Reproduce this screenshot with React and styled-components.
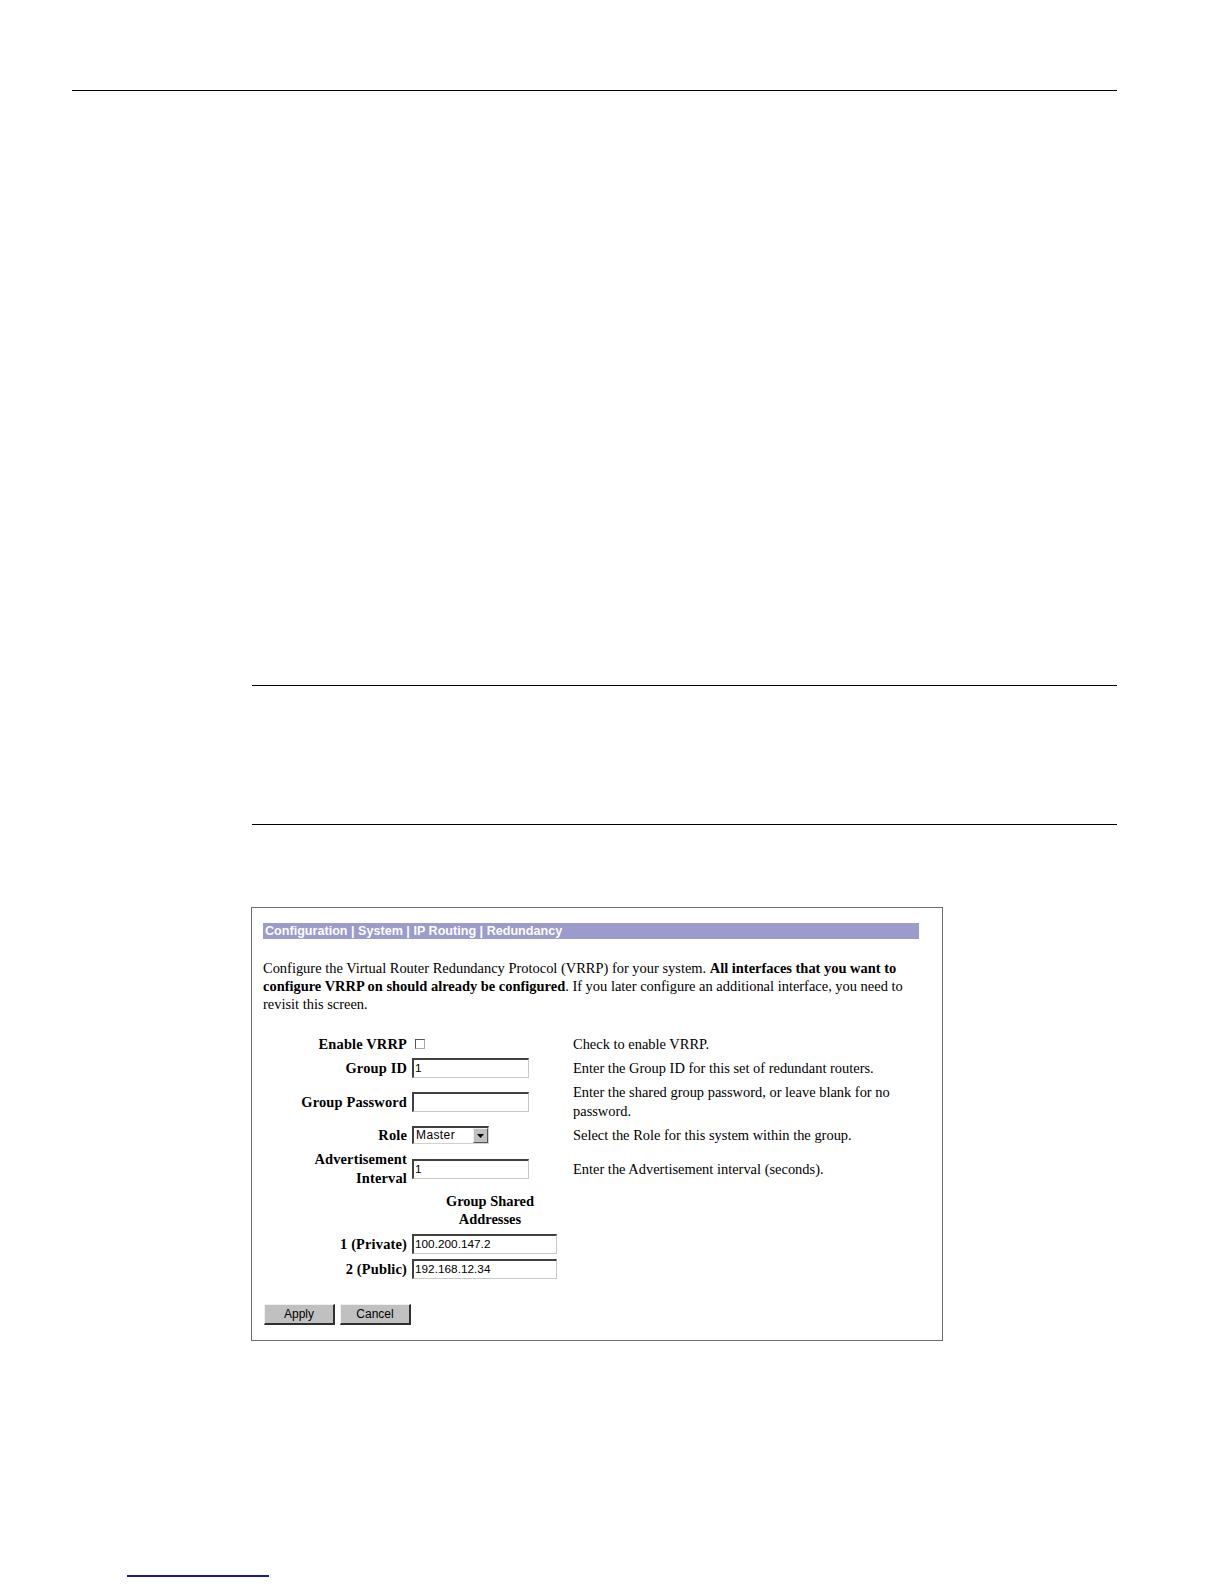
import React from "react";
import styled, { createGlobalStyle } from "styled-components";

const GlobalStyle = createGlobalStyle`
  html, body { margin: 0; padding: 0; background: #ffffff; }
  body { font-family: "Liberation Serif", "Times New Roman", serif; color: #000; }
`;

const Page = styled.div`
  display: flex;
  flex-direction: column;
  align-items: flex-start;
`;

const Rule = styled.div`
  height: 1px;
  background: #000;
  margin-top: ${(p) => p.$top}px;
  margin-left: ${(p) => p.$left}px;
  width: ${(p) => p.$width}px;
`;

const FooterRule = styled.div`
  height: 2px;
  background: #1c1c8a;
  margin-top: 234px;
  margin-left: 127px;
  width: 142px;
`;

const Panel = styled.div`
  margin-top: 82px;
  margin-left: 251px;
  width: 692px;
  box-sizing: border-box;
  border: 1px solid #6e6e6e;
  padding: 15px 23px 15px 11px;
`;

const TitleBar = styled.div`
  height: 16px;
  background: #9b9bcc;
  color: #ffffff;
  font-family: "Liberation Sans", Arial, sans-serif;
  font-weight: bold;
  font-size: 12.6px;
  line-height: 16px;
  padding-left: 2px;
  white-space: nowrap;
`;

const Intro = styled.p`
  margin: 20px 0 0 0;
  font-size: 14.45px;
  line-height: 18.2px;
`;

const Form = styled.div`
  display: grid;
  grid-template-columns: 144px 156px 346px;
  column-gap: 5px;
  row-gap: 5.3px;
  align-items: center;
  margin-top: 21px;
  font-size: 14.45px;
  line-height: 18.2px;
`;

const Label = styled.div`
  text-align: right;
  font-weight: bold;
  letter-spacing: 0.15px;
`;

const Control = styled.div`
  display: flex;
  align-items: center;
  min-height: ${(p) => (p.$tall ? "20px" : "0")};
  justify-content: ${(p) => (p.$center ? "center" : "flex-start")};
  font-weight: ${(p) => (p.$center ? "bold" : "normal")};
  text-align: center;
`;

const Help = styled.div``;

const Box = styled.div`
  width: 10px;
  height: 10px;
  margin-left: 3px;
  box-sizing: border-box;
  border: 1px solid #555;
  border-right-color: #aaa;
  border-bottom-color: #aaa;
  background: #fff;
`;

const TextInput = styled.div`
  width: ${(p) => p.$w}px;
  height: 20px;
  box-sizing: border-box;
  border-top: 2px solid #404040;
  border-left: 2px solid #404040;
  border-right: 1px solid #c8c8c8;
  border-bottom: 1px solid #c8c8c8;
  background: #fff;
  font-family: "Liberation Sans", Arial, sans-serif;
  font-size: 11.8px;
  line-height: 17px;
  padding-left: 1px;
  text-align: left;
  white-space: nowrap;
  overflow: hidden;
`;

const Select = styled.div`
  width: 77px;
  height: 18px;
  box-sizing: border-box;
  border-top: 2px solid #404040;
  border-left: 2px solid #404040;
  border-right: 1px solid #d0d0d0;
  border-bottom: 1px solid #d0d0d0;
  background: #fff;
  display: flex;
  align-items: stretch;
  font-family: "Liberation Sans", Arial, sans-serif;
  font-size: 12px;
`;

const SelectText = styled.span`
  flex: 1;
  line-height: 14px;
  padding-left: 2px;
  text-align: left;
  letter-spacing: 0.4px;
`;

const SelectButton = styled.span`
  width: 15px;
  background: #c0c0c0;
  box-sizing: border-box;
  border-top: 1px solid #eee;
  border-left: 1px solid #eee;
  border-right: 1px solid #555;
  border-bottom: 1px solid #555;
  display: flex;
  align-items: center;
  justify-content: center;
`;

const Buttons = styled.div`
  display: flex;
  gap: 5px;
  margin-top: 25px;
  padding-left: 1px;
`;

const Button = styled.div`
  width: 71px;
  height: 21px;
  box-sizing: border-box;
  background: #c0c0c0;
  border-top: 1px solid #f0f0f0;
  border-left: 1px solid #f0f0f0;
  border-right: 2px solid #303030;
  border-bottom: 2px solid #303030;
  font-family: "Liberation Sans", Arial, sans-serif;
  font-size: 12px;
  line-height: 18px;
  text-align: center;
`;

const fields = [
  { label: "Enable VRRP", kind: "check", help: "Check to enable VRRP." },
  { label: "Group ID", kind: "input", w: 117, value: "1", help: "Enter the Group ID for this set of redundant routers." },
  { label: "Group Password", kind: "input", w: 117, value: "", help: "Enter the shared group password, or leave blank for no password." },
  { label: "Role", kind: "select", value: "Master", help: "Select the Role for this system within the group." },
  { label: ["Advertisement", "Interval"], kind: "input", w: 117, value: "1", help: "Enter the Advertisement interval (seconds)." },
  { label: "", kind: "heading", value: ["Group Shared", "Addresses"], help: "" },
  { label: "1 (Private)", kind: "input", w: 145, value: "100.200.147.2", help: "" },
  { label: "2 (Public)", kind: "input", w: 145, value: "192.168.12.34", help: "" },
];

function renderControl(f) {
  if (f.kind === "check") return <Box />;
  if (f.kind === "input") return <TextInput $w={f.w}>{f.value}</TextInput>;
  if (f.kind === "select")
    return (
      <Select>
        <SelectText>{f.value}</SelectText>
        <SelectButton>
          <svg width="7" height="4" viewBox="0 0 7 4">
            <path d="M0 0 H7 L3.5 4 Z" fill="#000" />
          </svg>
        </SelectButton>
      </Select>
    );
  return (
    <span>
      {f.value[0]}
      <br />
      {f.value[1]}
    </span>
  );
}

export default function App() {
  return (
    <>
      <GlobalStyle />
      <Page>
        <Rule $top={90} $left={72} $width={1045} />
        <Rule $top={594} $left={252} $width={865} />
        <Rule $top={138} $left={252} $width={865} />
        <Panel>
          <TitleBar>Configuration | System | IP Routing | Redundancy</TitleBar>
          <Intro>
            Configure the Virtual Router Redundancy Protocol (VRRP) for your system.{" "}
            <b>All interfaces that you want to configure VRRP on should already be configured</b>. If you
            later configure an additional interface, you need to revisit this screen.
          </Intro>
          <Form>
            {fields.map((f, i) => (
              <React.Fragment key={i}>
                <Label>
                  {Array.isArray(f.label) ? (
                    <>
                      {f.label[0]}
                      <br />
                      {f.label[1]}
                    </>
                  ) : (
                    f.label
                  )}
                </Label>
                <Control $center={f.kind === "heading"} $tall={f.kind === "select"}>
                  {renderControl(f)}
                </Control>
                <Help>{f.help}</Help>
              </React.Fragment>
            ))}
          </Form>
          <Buttons>
            <Button>Apply</Button>
            <Button>Cancel</Button>
          </Buttons>
        </Panel>
        <FooterRule />
      </Page>
    </>
  );
}
